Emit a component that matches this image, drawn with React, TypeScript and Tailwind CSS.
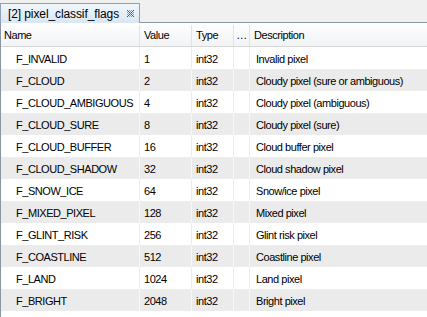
import React from 'react'

const rows = [
  ['F_INVALID', '1', 'Invalid pixel'],
  ['F_CLOUD', '2', 'Cloudy pixel (sure or ambiguous)'],
  ['F_CLOUD_AMBIGUOUS', '4', 'Cloudy pixel (ambiguous)'],
  ['F_CLOUD_SURE', '8', 'Cloudy pixel (sure)'],
  ['F_CLOUD_BUFFER', '16', 'Cloud buffer pixel'],
  ['F_CLOUD_SHADOW', '32', 'Cloud shadow pixel'],
  ['F_SNOW_ICE', '64', 'Snow/ice pixel'],
  ['F_MIXED_PIXEL', '128', 'Mixed pixel'],
  ['F_GLINT_RISK', '256', 'Glint risk pixel'],
  ['F_COASTLINE', '512', 'Coastline pixel'],
  ['F_LAND', '1024', 'Land pixel'],
  ['F_BRIGHT', '2048', 'Bright pixel'],
]

function CloseIcon() {
  // checkered square glyph used as tab close button
  const cells: [number, number][] = []
  for (let y = 0; y < 7; y++)
    for (let x = 0; x < 7; x++) {
      if ((x + y) % 2 === 0 || x === y || x + y === 6) cells.push([x, y])
    }
  return (
    <svg width="7" height="7" viewBox="0 0 7 7" shapeRendering="crispEdges">
      {cells.map(([x, y], i) => {
        const onX = x === y || x + y === 6
        return <rect key={i} x={x} y={y} width="1" height="1" fill={onX ? '#555' : '#9a9a9a'} />
      })}
    </svg>
  )
}

export default function App() {
  const sep = (i: number) => (i % 2 ? 'border-[#f7f7f7]' : 'border-[#ececec]')
  return (
    <div className="w-[427px] h-[317px] overflow-hidden bg-[#f0f0f0] text-[11px] tracking-[-0.45px] text-black" style={{ fontFamily: '"Liberation Sans", Arial, sans-serif' }}>
      {/* tab strip */}
      <div className="h-[23px] flex items-end border-b border-[#8a96a3]">
        <div className="w-[140px] h-[20px] -mb-px flex items-center justify-between pl-[7px] pr-[5px] border border-b-0 border-[#8da2b8] bg-gradient-to-b from-[#f1f6fb] to-[#d9e7f4] text-[12px] tracking-[-0.1px]">
          <span>[2] pixel_classif_flags</span>
          <CloseIcon />
        </div>
      </div>

      {/* table */}
      <div className="bg-white border-l border-[#8a96a3] h-[294px]">
        <div className="flex h-[24px] pt-[2px] border-b border-[#d5d5d5] bg-gradient-to-b from-white via-[#f7f8fa] to-[#f2f4f6]">
          <div className="w-[139px] pl-[3px] flex items-center border-r border-[#e0e2e5]">Name</div>
          <div className="w-[52px] pl-[4px] flex items-center border-r border-[#e0e2e5]">Value</div>
          <div className="w-[42px] pl-[4px] flex items-center border-r border-[#e0e2e5]">Type</div>
          <div className="w-[16px] flex items-center justify-center border-r border-[#e0e2e5]">…</div>
          <div className="flex-1 pl-[4px] flex items-center">Description</div>
        </div>
        {rows.map(([name, value, desc], i) => (
          <div key={name} className={`flex h-[22px] ${i % 2 ? 'bg-[#ebebeb]' : 'bg-white'}`}>
            <div className={`w-[139px] pl-[15px] pt-[2px] flex items-center border-r ${sep(i)}`}>{name}</div>
            <div className={`w-[52px] pl-[4px] pt-[2px] flex items-center border-r ${sep(i)}`}>{value}</div>
            <div className={`w-[42px] pl-[4px] pt-[2px] flex items-center border-r ${sep(i)}`}>int32</div>
            <div className={`w-[16px] border-r ${sep(i)}`} />
            <div className="flex-1 pl-[6px] pt-[2px] flex items-center">{desc}</div>
          </div>
        ))}
      </div>
    </div>
  )
}
